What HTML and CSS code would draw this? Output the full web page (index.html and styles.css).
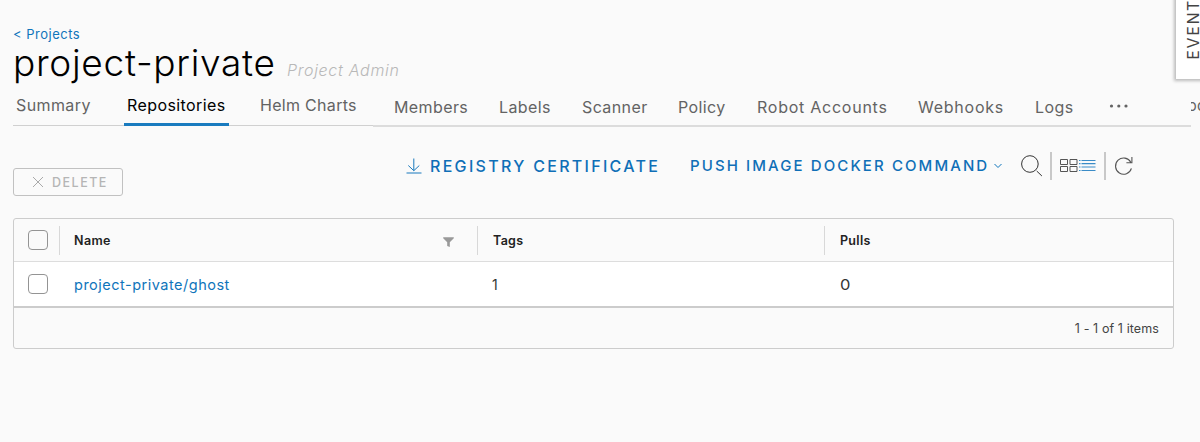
FILE: index.html
```
<!DOCTYPE html>
<html lang="en">
<head>
<meta charset="utf-8">
<title>project-private</title>
<link rel="stylesheet" href="styles.css">
</head>
<body>
<main class="page">
  <a class="back">&lt; Projects</a>
  <header class="heading">
    <h1 class="title">project-private</h1>
    <span class="role">Project Admin</span>
  </header>
  <nav class="tabs">
    <div class="tabs-main">
      <a class="tab summary">Summary</a>
      <a class="tab active">Repositories</a>
      <a class="tab helm">Helm Charts</a>
    </div>
    <div class="tabs-more">
      <a class="tab members">Members</a>
      <a class="tab labels">Labels</a>
      <a class="tab scanner">Scanner</a>
      <a class="tab policy">Policy</a>
      <a class="tab robots">Robot Accounts</a>
      <a class="tab webhooks">Webhooks</a>
      <a class="tab logs">Logs</a>
      <svg class="dots" width="20" height="6" viewBox="0 0 20 6"><circle cx="2.5" cy="3" r="1.6"/><circle cx="9.8" cy="3" r="1.6"/><circle cx="17" cy="3" r="1.6"/></svg>
    </div>
    <div class="cut-tab"><span class="cut-text">oc</span></div>
  </nav>
  <div class="toolbar">
    <button class="delete">
      <svg width="12" height="12" viewBox="0 0 12 12"><path d="M1 1l10 10M11 1L1 11"/></svg>
      <span class="delete-label">DELETE</span>
    </button>
    <div class="tools">
      <svg class="download" width="16" height="16" viewBox="0 0 16 16"><path d="M7.8 .5v12M2.3 7.5l5.5 5.2 5.5-5.2M.5 15h15"/></svg>
      <a class="certificate">REGISTRY CERTIFICATE</a>
      <a class="push">PUSH IMAGE DOCKER COMMAND</a>
      <svg class="caret" width="8" height="6" viewBox="0 0 8 6"><path d="M.5 1L4 4.5 7.5 1"/></svg>
      <svg class="search" width="22" height="22" viewBox="0 0 22 22"><circle cx="8.9" cy="9" r="8.3"/><path d="M15.7 16l5.2 5"/></svg>
      <i class="bar"></i>
      <svg class="views" width="36" height="14" viewBox="0 0 36 14"><path class="cards" d="M.5 .5h7v5h-7zM10 .5h7v5h-7zM.5 7.5h7v5h-7zM10 7.5h7v5h-7z"/><path class="list" d="M19 1.5h1.5M21.5 1.5H35.5M19 4.7h1.5M21.5 4.7H35.5M19 8h1.5M21.5 8H35.5M19 11.5h1.5M21.5 11.5H35.5"/></svg>
      <i class="bar"></i>
      <svg class="refresh" width="18" height="20" viewBox="0 0 18 20"><path d="M16.4 12.4A8.1 8.1 0 1 1 15.8 6.3M16.9 1v5.7h-5.5"/></svg>
    </div>
  </div>
  <section class="grid">
    <div class="row head">
      <div class="cell check"><i class="box"></i></div>
      <div class="cell"><span class="h-name">Name</span><svg class="filter" width="11" height="10" viewBox="0 0 11 10"><path d="M.2.3h10.6v1L6.8 5.2V10l-2.6-1V5.2L.2 1.3z"/></svg></div>
      <div class="cell"><span class="h-tags">Tags</span></div>
      <div class="cell"><span class="h-pulls">Pulls</span></div>
    </div>
    <div class="row item">
      <div class="cell check"><i class="box"></i></div>
      <div class="cell"><a class="repo">project-private/ghost</a></div>
      <div class="cell"><span class="tag-count">1</span></div>
      <div class="cell"><span class="pull-count">0</span></div>
    </div>
    <footer class="foot"><span class="count">1 - 1 of 1 items</span></footer>
  </section>
</main>
<aside class="event-tab"><span class="event-text">EVENT</span></aside>
</body>
</html>
```
FILE: styles.css
```
* { box-sizing: border-box; }
body { margin: 0; height: 442px; overflow: hidden; background: #fafafa; color: #333; font-family: Inter, sans-serif; }
svg { display: block; flex: none; fill: none; overflow: visible; }
.page { padding: 26px 0 0 13px; width: 1200px; }
.back { display: block; height: 16px; line-height: 16px; font-size: 13px; letter-spacing: .5px; color: #0f75bb; }
.heading { display: flex; align-items: baseline; height: 50px; }
.title { margin: -1px 0 0; width: 274px; line-height: 44px; font-size: 37px; font-weight: 300; letter-spacing: .7px; color: #000; white-space: nowrap; }
.role { font-size: 16px; font-style: italic; font-weight: 300; letter-spacing: .7px; color: #b8b8b8; white-space: nowrap; }
.tabs { display: flex; height: 35px; color: #636363; font-size: 16px; line-height: 20px; letter-spacing: .4px; white-space: nowrap; }
.tabs-main { display: grid; grid-template-columns: 111px 105px 144px; width: 360px; height: 34px; padding-top: 3px; border-bottom: 1px solid #d0d0d0; }
.tab { height: 30px; }
.summary { padding-left: 3px; }
.active { height: 31px; padding-left: 3px; border-bottom: 3px solid #197bbf; color: #000; }
.helm { padding-left: 31px; letter-spacing: .3px; }
.tabs-more { display: grid; grid-template-columns: 105px 83px 96px 79px 161px 117px 75px auto; width: 818px; height: 35px; padding: 5px 0 0 21px; border-bottom: 2px solid #dcdcdc; }
.robots { letter-spacing: .75px; }
.webhooks { letter-spacing: .75px; }
.dots { margin: 6px 0 0 -1px; fill: #636363; }
.cut-tab { display: flex; justify-content: flex-end; width: 9px; height: 30px; padding-top: 4px; overflow: hidden; font-size: 15px; }
.cut-text { margin-right: -6px; }
.toolbar { display: flex; height: 91px; }
.delete { display: flex; align-items: center; width: 110px; height: 28px; margin-top: 41px; padding: 0 0 0 18px; border: 1px solid #c1c1c1; border-radius: 3px; background: none; color: #b5b5b5; font: 500 12.5px/18px Inter, sans-serif; letter-spacing: 1.5px; }
.delete svg { stroke: #aaa; }
.delete-label { margin-left: 8px; padding-top: 1px; }
.tools { display: flex; align-items: center; height: 30px; margin: 24px 0 0 283px; color: #0f6fb7; white-space: nowrap; font-weight: 500; }
.download { stroke: #1979bd; }
.certificate { width: 260px; padding: 0 0 0 8px; font-size: 16px; letter-spacing: 2.3px; }
.push { width: 304px; margin-left: 8px; font-size: 15px; line-height: 18px; letter-spacing: 2.1px; }
.caret { margin: -1px 0 0 0; stroke: #0f75bb; }
.search { margin-left: 19px; stroke: #333; }
.bar { flex: none; width: 2px; height: 28px; margin-left: 7px; background: #c8c8c8; }
.views { margin-left: 8px; }
.views + .bar { margin-left: 8px; }
.cards { stroke: #555; }
.list { stroke: #3b8cc7; stroke-width: 1.2; }
.refresh { margin-left: 9px; stroke: #555; stroke-width: 1.1; }
.grid { width: 1161px; height: 131px; border: 1px solid #ccc; border-radius: 3px; overflow: hidden; }
.row { display: grid; grid-template-columns: 45px 418px 347px 349px; align-items: center; }
.head { height: 43px; border-bottom: 1px solid #ddd; font-size: 12.5px; font-weight: 600; color: #222; }
.item { height: 46px; background: #fff; border-bottom: 2px solid #ccc; font-size: 14px; }
.cell { display: flex; align-items: center; height: 29px; padding-left: 15px; border-left: 1px solid transparent; }
.head .cell + .cell { border-left-color: #d8d8d8; }
.cell.check { padding-left: 13px; }
.box { width: 20px; height: 20px; border: 1px solid #949494; border-radius: 4px; }
.h-name { margin-left: -1px; letter-spacing: .4px; }
.h-tags, .h-pulls { letter-spacing: .3px; }
.filter { margin: 3px 0 0 auto; fill: #999; }
.head .cell:nth-child(2) { padding-right: 23px; }
.repo { margin-left: -1px; color: #0f75bb; font-size: 14.5px; letter-spacing: .5px; }
.tag-count { margin-left: -1px; }
.pull-count { font-size: 15px; transform: scaleX(1.1); transform-origin: left; }
.foot { display: flex; justify-content: flex-end; align-items: center; height: 40px; padding-right: 14px; font-size: 12.5px; letter-spacing: .1px; color: #444; }
.event-tab { position: absolute; left: 1176px; top: -20px; width: 40px; height: 99px; background: #fff; box-shadow: 0 0 3px 2px #bcbcbc; }
.event-text { position: absolute; left: 8px; bottom: 19px; writing-mode: vertical-rl; transform: rotate(180deg); font-size: 16px; line-height: 19px; letter-spacing: 1.6px; color: #444; }
```
